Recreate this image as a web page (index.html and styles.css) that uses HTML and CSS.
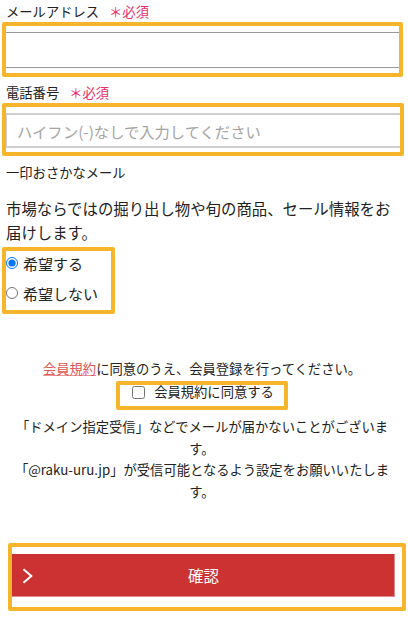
FILE: index.html
```html
<!DOCTYPE html>
<html lang="ja">
<head>
<meta charset="utf-8">
<title>会員登録</title>
<link rel="stylesheet" href="styles.css">
</head>
<body>
<form class="form">
  <div class="field-label">メールアドレス<span class="req">＊必須</span></div>
  <div class="hl hl-email"><input class="input input-email" type="email"></div>

  <div class="field-label label-tel">電話番号<span class="req">＊必須</span></div>
  <div class="hl hl-tel"><input class="input input-tel" type="tel" placeholder="ハイフン(-)なしで入力してください"></div>

  <div class="sub-title">一印おさかなメール</div>
  <p class="desc">市場ならではの掘り出し物や旬の商品、セール情報をお届けします。</p>

  <div class="hl hl-radio">
    <label class="radio-row"><input type="radio" name="mail" checked><span>希望する</span></label>
    <label class="radio-row"><input type="radio" name="mail"><span>希望しない</span></label>
  </div>

  <div class="agree">
    <p class="agree-text"><a href="#" class="link">会員規約</a>に同意のうえ、会員登録を行ってください。</p>
    <label class="hl hl-check"><input type="checkbox"><span>会員規約に同意する</span></label>
    <p class="note">「ドメイン指定受信」などでメールが届かないことがございます。<br>「@raku-uru.jp」が受信可能となるよう設定をお願いいたします。</p>
  </div>

  <div class="hl hl-button">
    <button type="button" class="btn">
      <svg class="chev" width="11" height="16" viewBox="0 0 11 16"><path d="M1.5 1.2 L9.3 8 L1.5 14.8" fill="none" stroke="#fff" stroke-width="2"/></svg>
      <span class="btn-label">確認</span>
      <span></span>
    </button>
  </div>
</form>
</body>
</html>
```

FILE: styles.css
```css
* { box-sizing: border-box; }
html, body { margin: 0; padding: 0; background: #fff; }
body {
  font-family: "Noto Sans CJK JP", "Noto Sans", sans-serif;
  color: #222;
  font-size: 13.3px;
}
.form {
  padding: 2px 5px 40px 6px;
}
.hl {
  border: 4px solid #f7b52c;
  border-radius: 2px;
  background: #fff;
}
.field-label {
  height: 20px;
  line-height: 20px;
}
.req {
  color: #e5306a;
  margin-left: 10px;
}
.label-tel { margin-top: 6px; }

.hl-email {
  margin-left: -4px;
  padding: 6px 0 5px;
}
.input {
  display: block;
  width: 100%;
  font-family: inherit;
  background: #fff;
  outline: none;
}
.input-email {
  height: 36px;
  border: 0;
  border-top: 1px solid #999;
  border-bottom: 1px solid #999;
}
.hl-tel {
  margin-left: -4px;
  margin-right: -1px;
  padding: 6px 0 4px;
}
.input-tel {
  height: 35px;
  border: 2px solid #cfcfcf;
  border-left-width: 1px;
  border-right: 0;
  padding: 0 0 0 10px;
  font-size: 15.3px;
  color: #222;
}
.input-tel::placeholder { color: #a5a5a5; }

.sub-title {
  margin-top: 7px;
  line-height: 20px;
}
.desc {
  margin: 13px 0 0;
  font-size: 15.4px;
  line-height: 24px;
}
.hl-radio {
  margin: 3px 0 0 -4px;
  width: 113px;
  padding: 0 0 5px;
}
.radio-row {
  display: flex;
  align-items: center;
  height: 24px;
  font-size: 15px;
}
.radio-row + .radio-row { margin-top: 6px; }
.radio-row input {
  width: 12px;
  height: 12px;
  margin: 0 5px 0 0;
}

.agree {
  text-align: center;
  margin-right: 5px;
}
.agree-text {
  margin: 44px 0 0;
  line-height: 22px;
}
.link {
  color: #e05555;
  text-decoration: underline;
  text-decoration-color: #e89a9a;
}
.hl-check {
  display: flex;
  align-items: center;
  width: max-content;
  margin: 1px auto 0;
  padding: 0 10px 7px 12px;
  height: 29px;
  line-height: 14px;
}
.hl-check input {
  width: 13px;
  height: 13px;
  margin: 0 9px 0 0;
}
.note {
  margin: 6px 0 0;
  line-height: 21.5px;
}

.hl-button {
  margin: 41px 0 0 2px;
  width: 398px;
  padding: 7px 7px 10px 0;
}
.btn {
  display: grid;
  grid-template-columns: 1fr auto 1fr;
  align-items: center;
  width: 100%;
  height: 43px;
  padding: 0 10px;
  border: 0;
  background: #cd3232;
  box-shadow: inset -1px -1px 0 #e38a8a;
  color: #fff;
  font-family: inherit;
  cursor: pointer;
}
.chev { display: block; justify-self: start; }
.btn-label {
  font-size: 15.5px;
  line-height: 1;
}
```
